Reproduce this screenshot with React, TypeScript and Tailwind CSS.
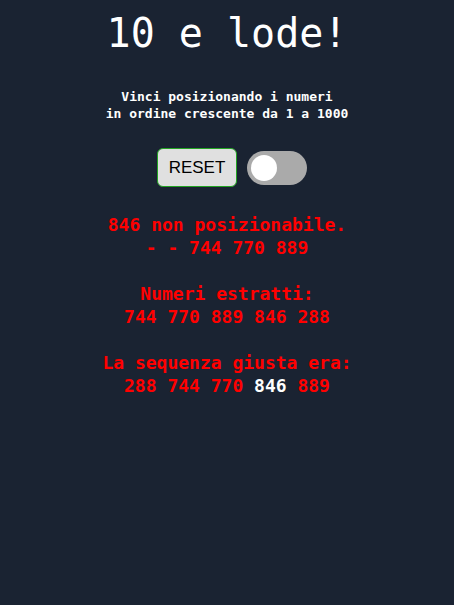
export default function App() {
  const mono = { fontFamily: '"DejaVu Sans Mono", monospace' };
  return (
    <div
      className="min-h-[605px] w-full bg-[#1a2332] flex flex-col items-center text-center"
      style={mono}
    >
      <h1 className="mt-[9px] text-[40px] leading-[48px] text-white">10 e lode!</h1>
      <p className="mt-[31px] text-[13px] leading-[17px] font-bold text-white">
        Vinci posizionando i numeri
        <br />
        in ordine crescente da 1 a 1000
      </p>
      <div className="mt-[26px] ml-[10px] flex items-center gap-[10px]">
        <button
          className="w-[80px] h-[39px] rounded-[6px] border border-[#22a322] bg-[#e0e0e0] text-[17px] text-black"
          style={{ fontFamily: '"Liberation Sans", Arial, sans-serif' }}
        >
          RESET
        </button>
        <div className="w-[60px] h-[34px] rounded-full bg-[#aaaaaa] flex items-center px-[4px]">
          <div className="w-[26px] h-[26px] rounded-full bg-white" />
        </div>
      </div>
      <div className="mt-[26px] text-[18px] leading-[23px] font-bold text-[#ff0000] flex flex-col gap-[23px]">
        <p>
          846 non posizionabile.
          <br />- - 744 770 889
        </p>
        <p>
          Numeri estratti:
          <br />
          744 770 889 846 288
        </p>
        <p>
          La sequenza giusta era:
          <br />
          288 744 770 <span className="text-white">846</span> 889
        </p>
      </div>
    </div>
  );
}
